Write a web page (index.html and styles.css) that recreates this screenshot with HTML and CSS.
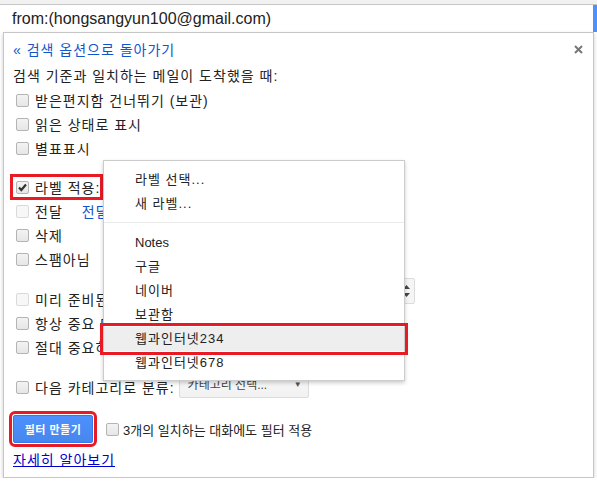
FILE: index.html
```html
<!DOCTYPE html>
<html lang="ko">
<head>
    <meta charset="UTF-8">
    <title>필터 만들기</title>
    <link rel="stylesheet" href="styles.css">
</head>
<body>
    <div class="topbar"></div>
    <div class="search">
        <div class="search-box">from:(hongsangyun100@gmail.com)</div>
        <div class="search-btn"></div>
    </div>

    <div class="panel">
        <div class="panel-head">
            <a class="back">« 검색 옵션으로 돌아가기</a>
            <svg class="close" width="9" height="9" viewBox="0 0 9 9"><path d="M1 1L8 8M8 1L1 8" stroke="#777" stroke-width="2"/></svg>
        </div>
        <div class="intro">검색 기준과 일치하는 메일이 도착했을 때:</div>

        <div class="group first">
            <div class="row"><span class="cb"></span>받은편지함 건너뛰기 (보관)</div>
            <div class="row"><span class="cb"></span>읽은 상태로 표시</div>
            <div class="row"><span class="cb"></span>별표표시</div>
        </div>

        <div class="group second">
            <div class="row">
                <span class="mark">
                    <span class="cb checked"><svg width="11" height="11" viewBox="0 0 11 11"><path d="M2 5.5l2.3 2.5L9 2.5" stroke="#333" stroke-width="2.2" fill="none"/></svg></span>라벨 적용:
                </span>
                <span class="sel-focus"></span>
            </div>
            <div class="row"><span class="cb off"></span>전달<a class="fwd-link">전달 주소 추가</a></div>
            <div class="row"><span class="cb"></span>삭제</div>
            <div class="row"><span class="cb"></span>스팸아님</div>
        </div>

        <div class="group">
            <div class="row reply">
                <span class="cb off"></span>미리 준비된 응답 보내기:
                <span class="sel-spin">
                    <svg width="7" height="12" viewBox="0 0 7 12"><path d="M3.5 0L7 4H0z M0 8h7l-3.5 4z" fill="#444"/></svg>
                </span>
            </div>
            <div class="row"><span class="cb"></span>항상 중요 메일로 표시</div>
            <div class="row"><span class="cb"></span>절대 중요하지 않음으로 표시</div>
        </div>

        <div class="group">
            <div class="row">
                <span class="cb"></span>다음 카테고리로 분류:
                <span class="sel-cat">카테고리 선택...<span class="arrow">▼</span></span>
            </div>
        </div>

        <div class="actions">
            <button class="create">필터 만들기</button>
            <span class="cb"></span>
            <span class="also">3개의 일치하는 대화에도 필터 적용</span>
        </div>
        <a class="learn">자세히 알아보기</a>

        <div class="menu">
            <div class="item">라벨 선택...</div>
            <div class="item">새 라벨...</div>
            <div class="sep"></div>
            <div class="item latin">Notes</div>
            <div class="item">구글</div>
            <div class="item">네이버</div>
            <div class="item">보관함</div>
            <div class="item active">웹과인터넷234</div>
            <div class="item">웹과인터넷678</div>
        </div>
    </div>
</body>
</html>
```

FILE: styles.css
```css
body {
    margin: 0;
    font-family: "Liberation Sans", "Noto Sans CJK KR", sans-serif;
    font-size: 14px;
    color: #222;
    background-color: #fff;
}

.topbar {
    height: 4px;
    background-color: #f1f1f1;
}

.search {
    display: flex;
    height: 28px;
    box-sizing: border-box;
    border-top: 1px solid #c6c6c6;
}

.search-box {
    flex: 1;
    padding-left: 12px;
    font-size: 16px;
    line-height: 27px;
}

.search-btn {
    width: 4px;
    background-color: #4d90fe;
}

.panel {
    position: relative;
    width: 591px;
    margin-left: 3px;
    box-sizing: border-box;
    border: 1px solid #c6c6c6;
    padding: 4px 10px 7px 9px;
    background-color: white;
    box-shadow: 0 2px 4px rgba(0, 0, 0, 0.2);
    letter-spacing: 1px;
}

.panel-head {
    display: flex;
    justify-content: space-between;
    align-items: center;
    height: 24px;
}

.back {
    color: #15c;
}

.intro {
    margin-top: 3px;
    line-height: 24px;
}

.group {
    margin-top: 16px;
}

.group.first {
    margin-top: 0;
}

.group.second {
    margin-top: 15px;
}

.row {
    display: flex;
    align-items: center;
    height: 24px;
    white-space: nowrap;
}

.cb {
    display: inline-flex;
    align-items: center;
    justify-content: center;
    width: 13px;
    height: 13px;
    box-sizing: border-box;
    margin: 0 6px 0 3px;
    border: 1px solid #b4b4b4;
    border-radius: 2px;
    background: linear-gradient(#f3f3f3, #e6e6e6);
}

.cb.off {
    border-color: #dadada;
    background: #f7f7f7;
}

.mark {
    display: flex;
    align-items: center;
    height: 20px;
    padding-left: 3px;
    outline: 3px solid #e81a24;
}

.mark .cb {
    margin-left: 0;
}

.sel-focus {
    align-self: flex-start;
    margin-top: -9px;
    margin-left: 3px;
    width: 150px;
    height: 28px;
    box-sizing: border-box;
    border: 1px solid #4d90fe;
    border-radius: 2px;
}

.fwd-link {
    margin-left: 19px;
    color: #15c;
}

.reply {
    width: 402px;
}

.sel-spin {
    flex: 1;
    align-self: flex-start;
    display: flex;
    justify-content: flex-end;
    align-items: center;
    margin-top: -9px;
    margin-left: 4px;
    height: 26px;
    box-sizing: border-box;
    padding-right: 4px;
    border: 1px solid #dcdcdc;
    border-radius: 2px;
    background-color: #f5f5f5;
}

.sel-cat {
    display: flex;
    align-items: flex-start;
    justify-content: space-between;
    width: 130px;
    height: 22px;
    box-sizing: border-box;
    margin-left: 4px;
    padding: 0 6px 0 8px;
    border: 1px solid #dcdcdc;
    border-radius: 2px;
    background: linear-gradient(#f8f8f8, #f1f1f1);
    font-size: 12px;
    line-height: 16px;
    letter-spacing: 0;
    color: #444;
}

.sel-cat .arrow {
    font-size: 8px;
    color: #555;
}

.actions {
    display: flex;
    align-items: center;
    margin-top: 16px;
    height: 28px;
    letter-spacing: 0;
}

.create {
    width: 80px;
    height: 28px;
    margin-right: 13px;
    border: 1px solid #3079ed;
    border-radius: 2px;
    background: linear-gradient(#4d90fe, #4787ed);
    color: white;
    font-family: inherit;
    font-size: 11px;
    font-weight: bold;
    letter-spacing: 0.5px;
    outline: 3px solid #e81a24;
    outline-offset: 1px;
}

.actions .cb {
    margin: 0 4px 0 0;
}

.also {
    font-size: 13px;
}

.learn {
    display: block;
    margin-top: 7px;
    line-height: 20px;
    color: #00c;
    text-decoration: underline;
}

.menu {
    position: absolute;
    left: 99px;
    top: 127px;
    width: 302px;
    box-sizing: border-box;
    padding: 7px 0 5px;
    border: 1px solid #ccc;
    background-color: white;
    box-shadow: 0 2px 4px rgba(0, 0, 0, 0.2);
}

.item {
    height: 24px;
    line-height: 24px;
    padding-left: 31px;
    font-size: 13px;
}

.item.latin {
    letter-spacing: 0;
}

.item.active {
    background-color: #eee;
    outline: 3px solid #e81a24;
    outline-offset: 1px;
}

.sep {
    height: 1px;
    margin: 6px 0 8px;
    background-color: #ebebeb;
}
```
